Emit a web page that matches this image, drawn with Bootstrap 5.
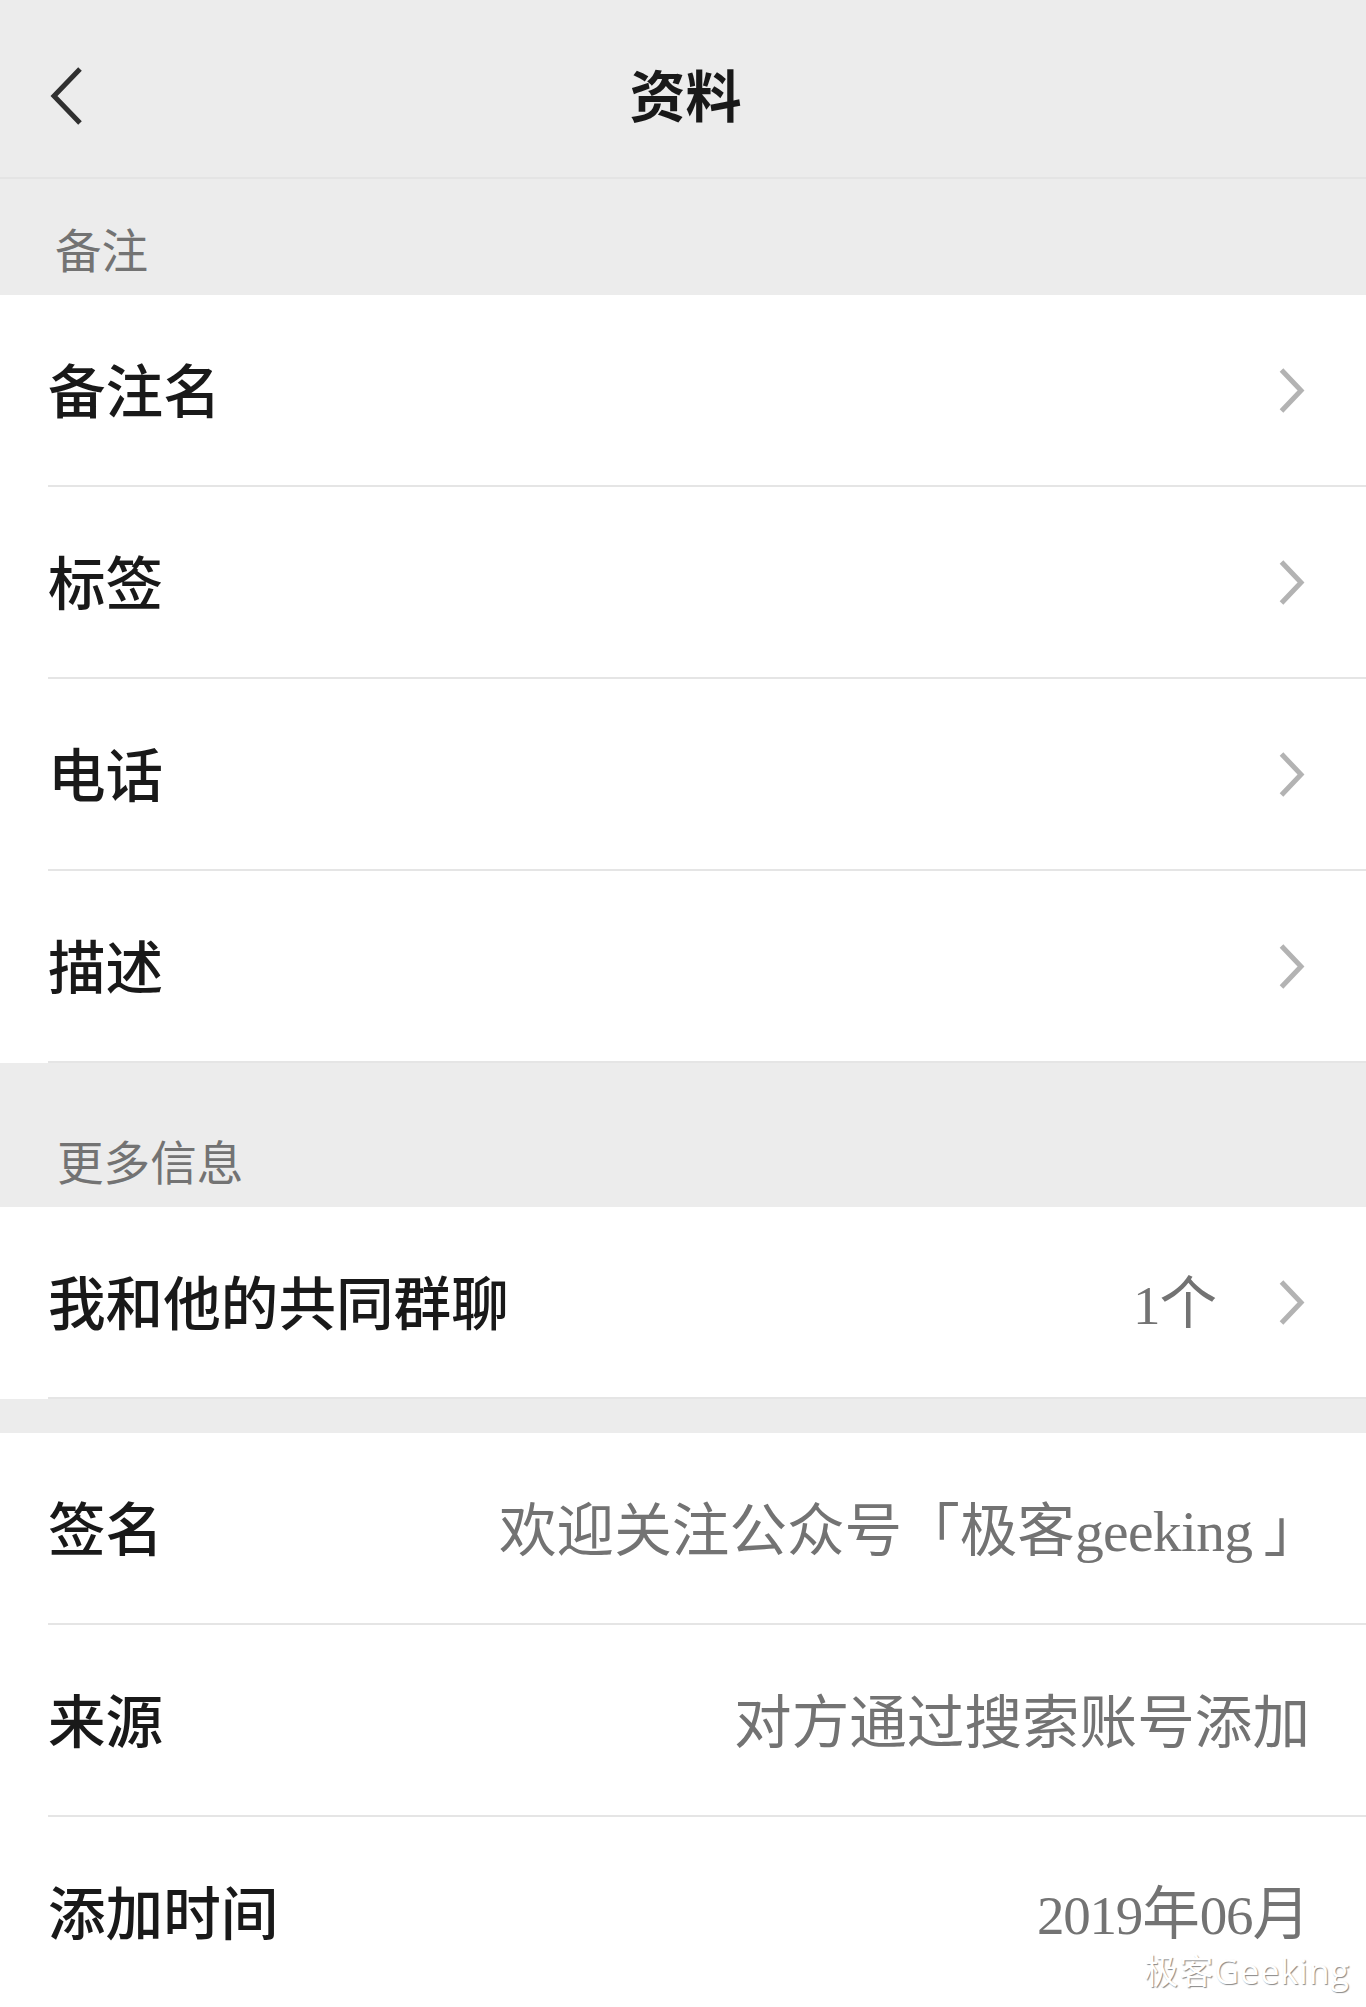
<!DOCTYPE html>
<html lang="zh-CN">
<head>
<meta charset="utf-8">
<meta name="viewport" content="width=device-width, initial-scale=1">
<title>资料</title>
<link href="https://cdn.jsdelivr.net/npm/bootstrap@5.3.0/dist/css/bootstrap.min.css" rel="stylesheet">
<style>
  body { background: #ececec; color: #191919; font-family: "Liberation Serif", KaiTi, "Kaiti SC", STKaiti, "Noto Sans CJK SC", serif; text-spacing-trim: space-all; }
  .screen { height: 2007px; }
  .topbar { height: 179px; padding: 14px 48px 0; border-bottom: 2px solid #e4e4e4; }
  .topbar h1 { font-size: 56px; line-height: 80px; font-weight: 700; padding: 5px 0 0 5px; }
  .side { width: 40px; }
  .group-title { font-size: 46.6px; line-height: 60px; color: #737373; padding-left: 55px; }
  .group-note { height: 116px; padding-bottom: 13px; }
  .group-more { height: 144px; padding: 0 0 13px 57px; }
  .group-gap { height: 34px; }
  .cell { height: 192px; padding-left: 48px; font-size: 57.6px; line-height: 80px; }
  .cell-body { border-bottom: 2px solid #e5e5e5; padding-right: 56px; }
  .cell-body > span { padding-top: 7px; }
  .cell-body.linked { padding-right: 61px; gap: 62px; }
  .field { font-weight: 500; }
  .value { color: #737373; }
  .latin { letter-spacing: -.7px; }
  .num { font-size: 55px; letter-spacing: -1.2px; }
  .close-quote { margin: 0 -11px 0 11px; }
  .watermark { right: 16px; bottom: 12px; font: 34px/48px "Open Sans", "Noto Sans CJK SC", sans-serif; letter-spacing: 1px; color: #fff; text-shadow: 1px 1px 1px #888; }
</style>
</head>
<body>
<svg class="d-none">
  <symbol id="next" viewBox="0 0 26 46"><path d="M2.500 3 22 23.500 2.500 44" fill="none" stroke="#b3b3b3" stroke-width="5"/></symbol>
</svg>
<main class="screen d-flex flex-column overflow-hidden position-relative">
  <header class="topbar d-flex align-items-center justify-content-between flex-shrink-0">
    <a href="#" class="side d-flex" aria-label="返回"><svg width="36" height="60" viewBox="0 0 36 60"><path d="M32 3 6 30 32 57" fill="none" stroke="#303030" stroke-width="5"/></svg></a>
    <h1 class="m-0">资料</h1>
    <span class="side"></span>
  </header>

  <div class="group-title group-note d-flex align-items-end flex-shrink-0">备注</div>
  <section>
    <div class="cell bg-white"><div class="cell-body linked h-100 d-flex align-items-center"><span class="field me-auto">备注名</span><svg width="26" height="46"><use href="#next"/></svg></div></div>
    <div class="cell bg-white"><div class="cell-body linked h-100 d-flex align-items-center"><span class="field me-auto">标签</span><svg width="26" height="46"><use href="#next"/></svg></div></div>
    <div class="cell bg-white"><div class="cell-body linked h-100 d-flex align-items-center"><span class="field me-auto">电话</span><svg width="26" height="46"><use href="#next"/></svg></div></div>
    <div class="cell bg-white"><div class="cell-body linked h-100 d-flex align-items-center"><span class="field me-auto">描述</span><svg width="26" height="46"><use href="#next"/></svg></div></div>
  </section>

  <div class="group-title group-more d-flex align-items-end flex-shrink-0">更多信息</div>
  <section>
    <div class="cell bg-white"><div class="cell-body linked h-100 d-flex align-items-center"><span class="field me-auto">我和他的共同群聊</span><span class="value"><span class="num">1</span>个</span><svg width="26" height="46"><use href="#next"/></svg></div></div>
  </section>

  <div class="group-gap flex-shrink-0"></div>
  <section>
    <div class="cell bg-white"><div class="cell-body h-100 d-flex align-items-center justify-content-between"><span class="field">签名</span><span class="value text-nowrap">欢迎关注公众号「极客<span class="latin">geeking</span><span class="close-quote">」</span></span></div></div>
    <div class="cell bg-white"><div class="cell-body h-100 d-flex align-items-center justify-content-between"><span class="field">来源</span><span class="value">对方通过搜索账号添加</span></div></div>
    <div class="cell bg-white"><div class="cell-body h-100 d-flex align-items-center justify-content-between"><span class="field">添加时间</span><span class="value"><span class="num">2019</span>年<span class="num">06</span>月</span></div></div>
  </section>
  <div class="watermark position-absolute">极客Geeking</div>
</main>
<script src="https://cdn.jsdelivr.net/npm/bootstrap@5.3.0/dist/js/bootstrap.bundle.min.js"></script>
</body>
</html>
